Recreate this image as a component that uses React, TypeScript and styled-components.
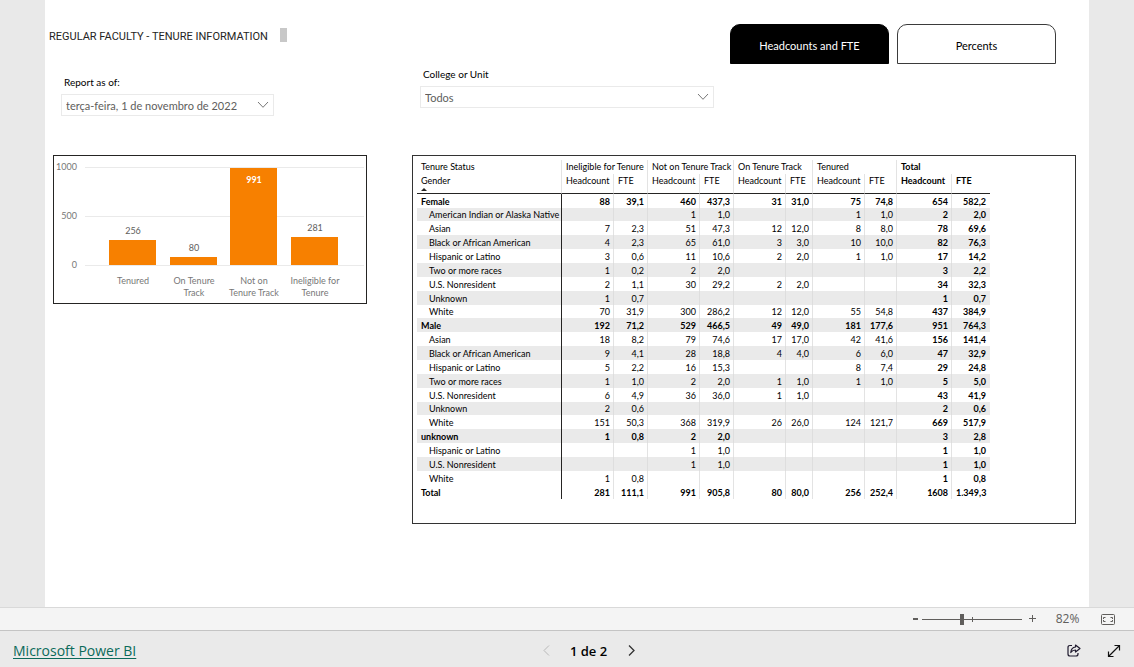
import React, { useState } from "react";
import styled, { createGlobalStyle } from "styled-components";

const GlobalStyle = createGlobalStyle`
  * { box-sizing: border-box; }
  body {
    margin: 0;
    background: #eaeaea;
    color: #000;
    font-family: Lato, "Open Sans", sans-serif;
    font-size: 9px;
  }
  button, select, input { font-family: inherit; }
`;

const Page = styled.div`
  display: flex;
  flex-direction: column;
  min-height: 100vh;
`;

const Stage = styled.main`
  flex: 1;
  display: flex;
  padding: 0 45px;
  background: #e9e9e9;
`;

const Report = styled.div`
  flex: 1;
  min-width: 0;
  background: #fff;
`;

const ReportHeader = styled.header`
  display: flex;
  padding: 24px 33px 0 4px;
`;

const Title = styled.h1`
  margin: 0;
  font-family: Roboto, sans-serif;
  font-size: 11px;
  line-height: 26px;
  font-weight: 400;
  color: #252423;
  white-space: nowrap;
`;

const Handle = styled.span`
  width: 7px;
  height: 14px;
  margin: 4px 0 0 12px;
  background: #c8c8c8;
`;

const Tabs = styled.nav`
  display: flex;
  gap: 8px;
  margin-left: auto;
`;

const Tab = styled.button<{ $active?: boolean }>`
  width: 159px;
  height: 40px;
  padding: 2px 0 0;
  border: 1px solid ${(p) => (p.$active ? "#000" : "#3b3b3b")};
  border-radius: 10px 10px 0 0;
  background: ${(p) => (p.$active ? "#000" : "#fff")};
  color: ${(p) => (p.$active ? "#fff" : "#000")};
  font-size: 11px;
  cursor: pointer;
`;

const Columns = styled.div`
  display: grid;
  grid-template-columns: 367px minmax(0, 1fr);
`;

const Filters = styled(Columns)`
  height: 91px;
`;

const Filter = styled.div<{ $width: number; $left: number; $top: number }>`
  width: ${(p) => p.$width}px;
  margin: ${(p) => p.$top}px 0 0 ${(p) => p.$left}px;
`;

const FilterLabel = styled.label`
  display: block;
  padding: 0 3px;
  font-size: 10px;
  line-height: 14px;
  margin-bottom: 5px;
`;

const SelectBox = styled.div`
  position: relative;
  svg {
    position: absolute;
    right: 5px;
    top: 7px;
    pointer-events: none;
  }
`;

const Select = styled.select`
  display: block;
  width: 100%;
  height: 22px;
  padding: 1px 20px 0 4px;
  border: 1px solid #eaeaea;
  border-radius: 0;
  background: #fff;
  color: #605e5c;
  font-size: 11px;
  appearance: none;
`;

const Visuals = styled(Columns)`
  padding-right: 13px;
  align-items: start;
`;

const ChartCard = styled.section`
  width: 314px;
  margin-left: 8px;
  border: 1px solid #252423;
  svg { display: block; }
`;

const TableCard = styled.section`
  min-height: 369px;
  padding: 4px;
  border: 1px solid #333;
  overflow-x: auto;
`;

const Matrix = styled.table`
  width: 573px;
  table-layout: fixed;
  border-collapse: separate;
  border-spacing: 0;
  font-size: 9px;
  line-height: 12px;
  white-space: nowrap;

  th, td {
    padding: 0 4px;
    border-right: 1px solid #e3e3e3;
    text-align: right;
    font-weight: 400;
  }
  td { padding-right: 3px; }
  th { text-align: left; }
  tr > :last-child { border-right: 0; padding-right: 4px; }
  thead tr:last-child th {
    height: 20px;
    vertical-align: top;
    padding-top: 1px;
    border-bottom: 1px solid #252423;
  }
`;

const HeadRow = styled.tr`
  height: 14px;
`;

const TotalHead = styled.th`
  && { font-weight: 700; }
`;

const SortMark = styled.svg`
  display: block;
  margin-top: 1px;
`;

const BodyRow = styled.tr<{ $bold?: boolean }>`
  height: 14px;
  &:nth-child(7n + 2) { height: 13px; }
  &:nth-child(even):not(:last-child) > * { background: #eaeaea; }
  &:nth-child(even):not(:last-child) > td { border-right-color: #dedede; }
  && > * {
    padding-top: 1px;
    font-weight: ${(p) => (p.$bold ? 700 : 400)};
  }
  && > :nth-last-child(-n + 2) { font-weight: 700; }
  && > th {
    padding-left: ${(p) => (p.$bold ? 4 : 12)}px;
    border-right-color: #252423;
  }
`;

const ZoomBar = styled.div`
  display: flex;
  align-items: center;
  justify-content: flex-end;
  height: 24px;
  padding-right: 11px;
  border-top: 1px solid #d9d9d9;
  border-bottom: 1px solid #c4c4c4;
  background: #f4f4f4;
  color: #605e5c;
  font-family: "Open Sans", sans-serif;
`;

const IconButton = styled.button<{ $width: number }>`
  display: flex;
  align-items: center;
  justify-content: center;
  width: ${(p) => p.$width}px;
  height: 22px;
  padding: 0;
  border: 0;
  background: none;
  color: inherit;
  cursor: pointer;
  &:disabled { color: #b8b8b8; }
`;

const Slider = styled.input`
  width: 100px;
  height: 12px;
  margin: 0;
  appearance: none;
  background:
    linear-gradient(#605e5c, #605e5c) 0 6px / 100% 1px no-repeat,
    linear-gradient(#605e5c, #605e5c) 50px 4px / 1px 5px no-repeat;
  &::-webkit-slider-thumb {
    appearance: none;
    width: 4px;
    height: 11px;
    background: #605e5c;
  }
`;

const ZoomValue = styled.span`
  width: 51px;
  text-align: center;
  font-size: 12px;
  line-height: 22px;
`;

const Footer = styled.footer`
  display: flex;
  align-items: center;
  justify-content: space-between;
  height: 36px;
  padding: 3px 0 0 13px;
  font-family: "Open Sans", sans-serif;
`;

const BrandLink = styled.a`
  width: 120px;
  color: #0b6a5a;
  font-size: 14px;
  line-height: 20px;
  white-space: nowrap;
  text-underline-offset: 2px;
`;

const Pager = styled.div`
  display: flex;
  align-items: center;
`;

const PageLabel = styled.span`
  width: 61px;
  text-align: center;
  font-size: 13px;
  line-height: 20px;
  font-weight: 600;
`;

const FooterActions = styled.div`
  display: flex;
  padding-left: 10px;
`;

const AxisText = styled.text`
  font-size: 9px;
  fill: #777;
`;

const ValueText = styled.text<{ $inside?: boolean }>`
  font-size: 9px;
  font-weight: ${(p) => (p.$inside ? 700 : 400)};
  fill: ${(p) => (p.$inside ? "#fff" : "#605e5c")};
  text-anchor: middle;
`;

const bars = [
  { lines: ["Tenured"], value: 256 },
  { lines: ["On Tenure", "Track"], value: 80 },
  { lines: ["Not on", "Tenure Track"], value: 991 },
  { lines: ["Ineligible for", "Tenure"], value: 281 },
];

const BASE = 109;
const SCALE = 98;

function BarChart() {
  return (
    <svg width="312" height="147" role="img" aria-label="Headcount by tenure status">
      {[1000, 500, 0].map((tick) => {
        const y = Math.round(BASE - (tick / 1000) * SCALE);
        return (
          <g key={tick}>
            <rect x="31" y={y} width="279" height="1" fill="#eaeaea" />
            <AxisText x="23" y={y + 3} textAnchor="end">{tick}</AxisText>
          </g>
        );
      })}
      {bars.map((bar, i) => {
        const x = 55 + Math.round(i * 60.6);
        const height = Math.round((bar.value / 1000) * SCALE);
        const inside = bar.value > 800;
        return (
          <g key={bar.lines.join(" ")}>
            <rect x={x} y={BASE - height} width="47" height={height} fill="#f78000" />
            <ValueText $inside={inside} x={x + 24} y={BASE - height + (inside ? 15 : -6)}>
              {bar.value}
            </ValueText>
            {bar.lines.map((line, n) => (
              <AxisText key={line} x={x + 24} y={128 + n * 12} textAnchor="middle">{line}</AxisText>
            ))}
          </g>
        );
      })}
    </svg>
  );
}

type Row = { label: string; bold?: boolean; cells: string };

const rows: Row[] = [
  { label: "Female", bold: true, cells: "88|39,1|460|437,3|31|31,0|75|74,8|654|582,2" },
  { label: "American Indian or Alaska Native", cells: "||1|1,0|||1|1,0|2|2,0" },
  { label: "Asian", cells: "7|2,3|51|47,3|12|12,0|8|8,0|78|69,6" },
  { label: "Black or African American", cells: "4|2,3|65|61,0|3|3,0|10|10,0|82|76,3" },
  { label: "Hispanic or Latino", cells: "3|0,6|11|10,6|2|2,0|1|1,0|17|14,2" },
  { label: "Two or more races", cells: "1|0,2|2|2,0|||||3|2,2" },
  { label: "U.S. Nonresident", cells: "2|1,1|30|29,2|2|2,0|||34|32,3" },
  { label: "Unknown", cells: "1|0,7|||||||1|0,7" },
  { label: "White", cells: "70|31,9|300|286,2|12|12,0|55|54,8|437|384,9" },
  { label: "Male", bold: true, cells: "192|71,2|529|466,5|49|49,0|181|177,6|951|764,3" },
  { label: "Asian", cells: "18|8,2|79|74,6|17|17,0|42|41,6|156|141,4" },
  { label: "Black or African American", cells: "9|4,1|28|18,8|4|4,0|6|6,0|47|32,9" },
  { label: "Hispanic or Latino", cells: "5|2,2|16|15,3|||8|7,4|29|24,8" },
  { label: "Two or more races", cells: "1|1,0|2|2,0|1|1,0|1|1,0|5|5,0" },
  { label: "U.S. Nonresident", cells: "6|4,9|36|36,0|1|1,0|||43|41,9" },
  { label: "Unknown", cells: "2|0,6|||||||2|0,6" },
  { label: "White", cells: "151|50,3|368|319,9|26|26,0|124|121,7|669|517,9" },
  { label: "unknown", bold: true, cells: "1|0,8|2|2,0|||||3|2,8" },
  { label: "Hispanic or Latino", cells: "||1|1,0|||||1|1,0" },
  { label: "U.S. Nonresident", cells: "||1|1,0|||||1|1,0" },
  { label: "White", cells: "1|0,8|||||||1|0,8" },
  { label: "Total", bold: true, cells: "281|111,1|991|905,8|80|80,0|256|252,4|1608|1.349,3" },
];

const columnWidths = [145, 52, 34, 52, 34, 52, 27, 52, 32, 55, 38];
const groups = ["Ineligible for Tenure", "Not on Tenure Track", "On Tenure Track", "Tenured"];

function TenureMatrix() {
  return (
    <Matrix>
      <colgroup>
        {columnWidths.map((w, i) => (
          <col key={i} width={w} />
        ))}
      </colgroup>
      <thead>
        <HeadRow>
          <th scope="col">Tenure Status</th>
          {groups.map((g) => (
            <th key={g} colSpan={2} scope="colgroup">{g}</th>
          ))}
          <TotalHead colSpan={2} scope="colgroup">Total</TotalHead>
        </HeadRow>
        <HeadRow>
          <th scope="col">
            Gender
            <SortMark width="6" height="3" viewBox="0 0 6 3" aria-hidden="true">
              <path d="M0 3 L3 0 L6 3 Z" fill="#252423" />
            </SortMark>
          </th>
          {groups.map((g) => (
            <React.Fragment key={g}>
              <th scope="col">Headcount</th>
              <th scope="col">FTE</th>
            </React.Fragment>
          ))}
          <TotalHead scope="col">Headcount</TotalHead>
          <TotalHead scope="col">FTE</TotalHead>
        </HeadRow>
      </thead>
      <tbody>
        {rows.map((row, i) => (
          <BodyRow key={i} $bold={row.bold}>
            <th scope="row">{row.label}</th>
            {row.cells.split("|").map((cell, n) => (
              <td key={n}>{cell}</td>
            ))}
          </BodyRow>
        ))}
      </tbody>
    </Matrix>
  );
}

const Caret = () => (
  <svg width="12" height="8" viewBox="0 0 12 8" fill="none" stroke="#777" aria-hidden="true">
    <path d="M1 1 L6 6.3 L11 1" />
  </svg>
);

export default function App() {
  const [zoom, setZoom] = useState(40);
  return (
    <Page>
      <GlobalStyle />
      <Stage>
        <Report>
          <ReportHeader>
            <Title>REGULAR FACULTY - TENURE INFORMATION</Title>
            <Handle />
            <Tabs>
              <Tab $active>Headcounts and FTE</Tab>
              <Tab>Percents</Tab>
            </Tabs>
          </ReportHeader>
          <Filters>
            <Filter $width={213} $left={16} $top={11}>
              <FilterLabel htmlFor="as-of">Report as of:</FilterLabel>
              <SelectBox>
                <Select id="as-of">
                  <option>terça-feira, 1 de novembro de 2022</option>
                </Select>
                <Caret />
              </SelectBox>
            </Filter>
            <Filter $width={294} $left={8} $top={3}>
              <FilterLabel htmlFor="unit">College or Unit</FilterLabel>
              <SelectBox>
                <Select id="unit">
                  <option>Todos</option>
                </Select>
                <Caret />
              </SelectBox>
            </Filter>
          </Filters>
          <Visuals>
            <ChartCard>
              <BarChart />
            </ChartCard>
            <TableCard>
              <TenureMatrix />
            </TableCard>
          </Visuals>
        </Report>
      </Stage>
      <ZoomBar>
        <IconButton $width={14} aria-label="Zoom out">
          <svg width="5" height="2"><rect width="5" height="2" fill="currentColor" /></svg>
        </IconButton>
        <Slider
          type="range"
          min={0}
          max={100}
          value={zoom}
          aria-label="Zoom"
          onChange={(e) => setZoom(Number(e.target.value))}
        />
        <IconButton $width={20} aria-label="Zoom in">
          <svg width="8" height="8" stroke="currentColor"><path d="M1 3.5 H8 M4.5 0 V7" /></svg>
        </IconButton>
        <ZoomValue>82%</ZoomValue>
        <IconButton $width={30} aria-label="Fit to page">
          <svg width="14" height="11" viewBox="0 0 14 11" fill="none" stroke="currentColor">
            <rect x="0.5" y="0.5" width="13" height="10" rx="1" />
            <path d="M4.5 3.5 H2.5 V5 M2.5 6 V7.5 H4.5 M9.5 3.5 H11.5 V5 M11.5 6 V7.5 H9.5" />
          </svg>
        </IconButton>
      </ZoomBar>
      <Footer>
        <BrandLink href="#">Microsoft Power BI</BrandLink>
        <Pager>
          <IconButton $width={24} disabled aria-label="Previous page">
            <svg width="7" height="11" viewBox="0 0 7 11" fill="none" stroke="currentColor">
              <path d="M6 0.5 L1 5.5 L6 10.5" />
            </svg>
          </IconButton>
          <PageLabel>1 de 2</PageLabel>
          <IconButton $width={24} aria-label="Next page">
            <svg width="7" height="11" viewBox="0 0 7 11" fill="none" stroke="#333" strokeWidth="1.3">
              <path d="M1 0.5 L6 5.5 L1 10.5" />
            </svg>
          </IconButton>
        </Pager>
        <FooterActions>
          <IconButton $width={40} aria-label="Share">
            <svg width="14" height="13" viewBox="0 0 14 13" fill="none" stroke="#1f1a2e" strokeWidth="1.2" strokeLinejoin="round">
              <path d="M5 1.5 H3 Q1 1.5 1 3.5 V10 Q1 12 3 12 H9 Q11 12 11 10 V9" />
              <path d="M8.5 1 L13 4.5 L8.5 8 V6 Q5.5 6 3.8 8.5 Q4.2 3.4 8.5 3 Z" />
            </svg>
          </IconButton>
          <IconButton $width={40} aria-label="Full screen">
            <svg width="14" height="14" viewBox="0 0 14 14" fill="none" stroke="#111" strokeWidth="1.2">
              <path d="M1.5 12.5 L12.5 1.5 M7.5 1.5 H12.5 V6.5 M1.5 7.5 V12.5 H6.5" />
            </svg>
          </IconButton>
        </FooterActions>
      </Footer>
    </Page>
  );
}
